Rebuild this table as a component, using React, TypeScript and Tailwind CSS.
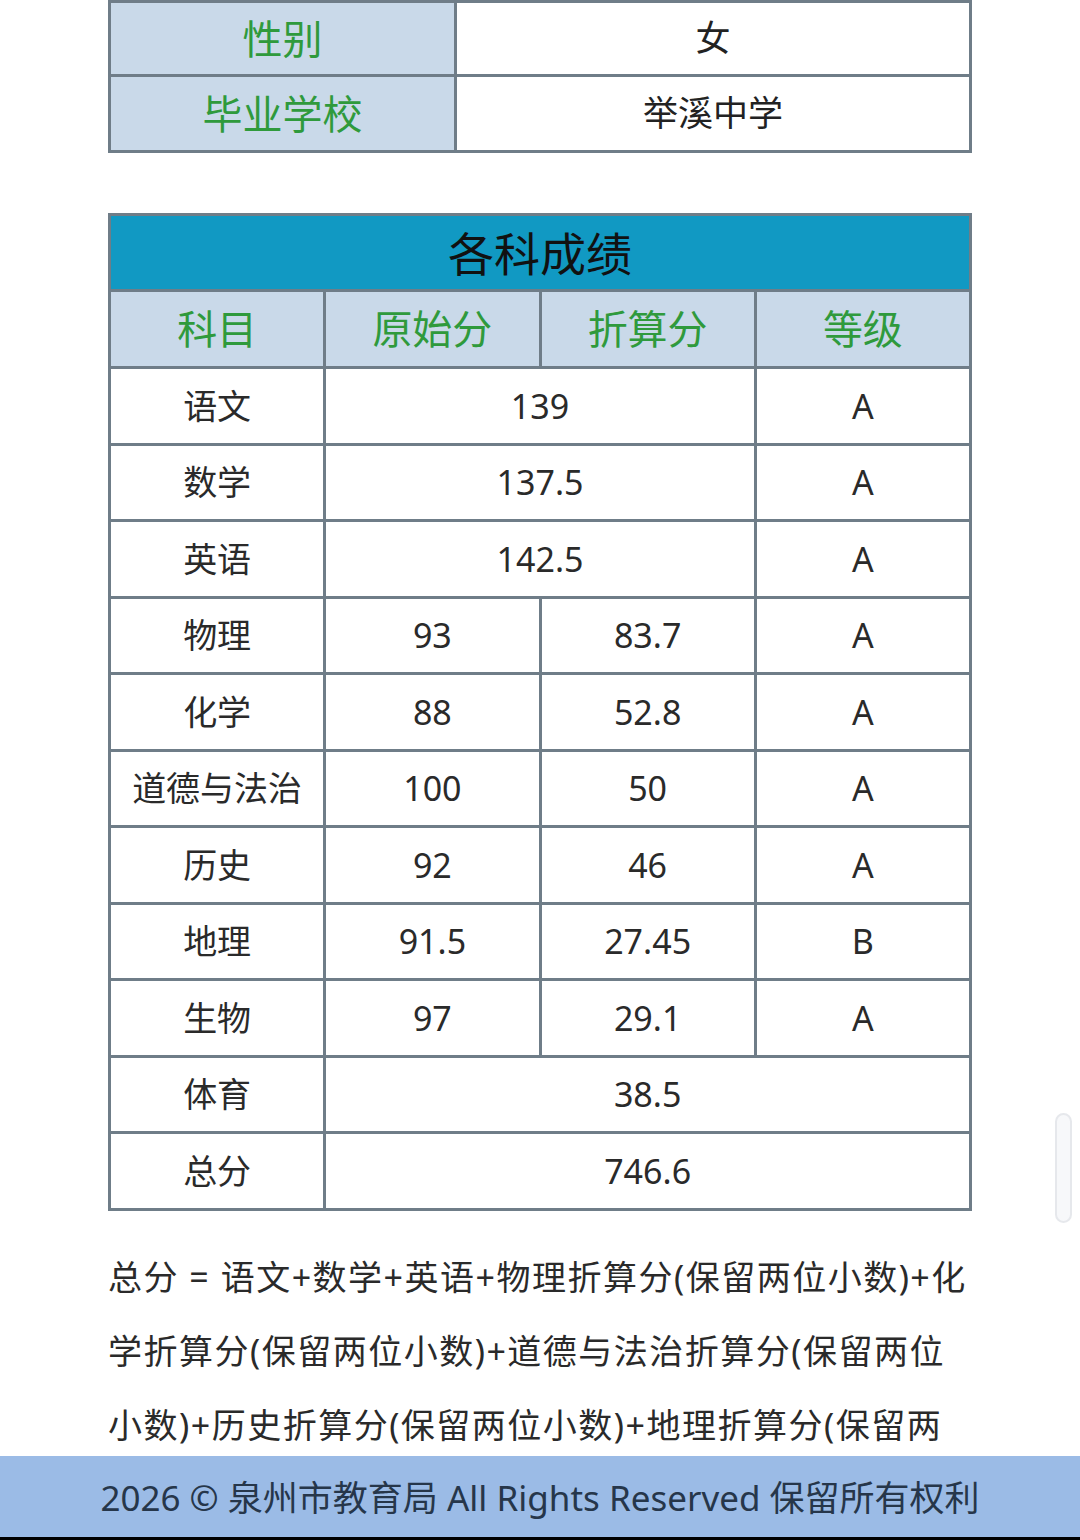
const font = {
  fontFamily: '"Noto Sans", "Noto Sans CJK SC", sans-serif',
};

const rows: { name: string; raw: string; conv?: string; grade?: string }[] = [
  { name: "语文", raw: "139", grade: "A" },
  { name: "数学", raw: "137.5", grade: "A" },
  { name: "英语", raw: "142.5", grade: "A" },
  { name: "物理", raw: "93", conv: "83.7", grade: "A" },
  { name: "化学", raw: "88", conv: "52.8", grade: "A" },
  { name: "道德与法治", raw: "100", conv: "50", grade: "A" },
  { name: "历史", raw: "92", conv: "46", grade: "A" },
  { name: "地理", raw: "91.5", conv: "27.45", grade: "B" },
  { name: "生物", raw: "97", conv: "29.1", grade: "A" },
  { name: "体育", raw: "38.5" },
  { name: "总分", raw: "746.6" },
];

export default function App() {
  const cell = "border-[3px] border-[#6f7d88] text-center align-middle";
  return (
    <div className="relative min-h-[1540px] bg-white overflow-hidden" style={font}>
      <div className="ml-[108px] w-[864px]">
        <table className="w-[864px] border-collapse table-fixed">
          <tbody>
            <tr className="h-[74px]">
              <td className={`${cell} w-[346px] bg-[#c9d9e9] text-[40px] text-[#2f9a3c]`}>性别</td>
              <td className={`${cell} text-[35px] text-[#222]`}>女</td>
            </tr>
            <tr className="h-[76px]">
              <td className={`${cell} bg-[#c9d9e9] text-[40px] text-[#2f9a3c]`}>毕业学校</td>
              <td className={`${cell} text-[35px] text-[#222]`}>举溪中学</td>
            </tr>
          </tbody>
        </table>

        <table className="mt-[60px] w-[864px] border-collapse table-fixed">
          <tbody>
            <tr className="h-[76px]">
              <td colSpan={4} className={`${cell} bg-[#1199c3] text-[46px] leading-[60px] text-[#111]`}>
                各科成绩
              </td>
            </tr>
            <tr className="h-[77px]">
              {["科目", "原始分", "折算分", "等级"].map((h) => (
                <td key={h} className={`${cell} w-[216px] bg-[#c9d9e9] text-[40px] leading-[56px] text-[#2f9a3c]`}>
                  {h}
                </td>
              ))}
            </tr>
            {rows.map((r) => (
              <tr key={r.name} className="h-[76.5px] text-[34px] leading-[50px] text-[#2a2a2a]">
                <td className={cell}>{r.name}</td>
                {r.conv ? (
                  <>
                    <td className={cell}>{r.raw}</td>
                    <td className={cell}>{r.conv}</td>
                  </>
                ) : (
                  <td colSpan={r.grade ? 2 : 3} className={cell}>
                    {r.raw}
                  </td>
                )}
                {r.grade && <td className={cell}>{r.grade}</td>}
              </tr>
            ))}
          </tbody>
        </table>

        <p className="mt-[29px] w-[864px] text-[34px] leading-[74px] tracking-[1.5px] text-[#2a2a2a]">
          总分 = 语文+数学+英语+物理折算分(保留两位小数)+化学折算分(保留两位小数)+道德与法治折算分(保留两位小数)+历史折算分(保留两位小数)+地理折算分(保留两位小数)+生物折算分(保留两位小数)+体育
        </p>
      </div>

      {/* scroll indicator */}
      <div className="absolute left-[1055px] top-[1113px] h-[110px] w-[17px] rounded-full border-2 border-[#e6e8ec] bg-[#f7f8fa]" />

      <footer className="fixed bottom-0 left-0 right-0 z-20">
        <div className="flex h-[81px] items-center justify-center bg-[#9bbbe6] pt-[4px] text-[35px] text-[#26364a]">
          2026 © 泉州市教育局 All Rights Reserved 保留所有权利
        </div>
        <div className="h-[3px] bg-black" />
      </footer>
    </div>
  );
}
